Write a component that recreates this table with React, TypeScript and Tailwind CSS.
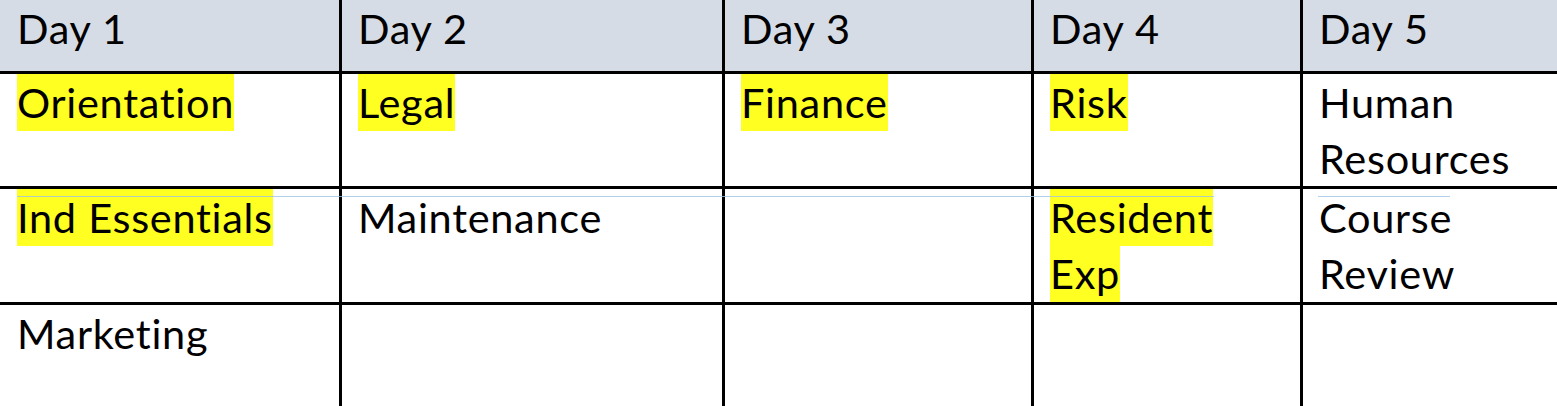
import React from "react";

type Seg = { t: string; h?: boolean };

const header = ["Day 1", "Day 2", "Day 3", "Day 4", "Day 5"];

const rows: Seg[][][] = [
  [
    [{ t: "Orientation", h: true }],
    [{ t: "Legal", h: true }],
    [{ t: "Finance", h: true }],
    [{ t: "Risk", h: true }],
    [{ t: "Human" }, { t: "Resources" }],
  ],
  [
    [{ t: "Ind Essentials", h: true }],
    [{ t: "Maintenance" }],
    [],
    [{ t: "Resident", h: true }, { t: "Exp", h: true }],
    [{ t: "Course" }, { t: "Review" }],
  ],
  [[{ t: "Marketing" }], [], [], [], []],
];

const cols = "grid grid-cols-[339px_383px_309px_269px_257px]";
const heights = ["h-[115px]", "h-[116px]", "h-[101px]"];

function Cell({ i, children }: { i: number; children?: React.ReactNode }) {
  return (
    <div
      className={
        i === 0
          ? "pl-[17px] overflow-hidden"
          : "border-l-[3px] border-black pl-[16px] overflow-hidden"
      }
    >
      {children}
    </div>
  );
}

function Line({ seg }: { seg: Seg }) {
  return (
    <div className="h-[56px] leading-[57px] whitespace-nowrap">
      <span
        className={
          "inline-block h-[57px] leading-[57px] " + (seg.h ? "bg-[#ffff22]" : "")
        }
      >
        {seg.t}
      </span>
    </div>
  );
}

export default function App() {
  return (
    <div className="relative w-[1557px] h-[406px] overflow-hidden bg-white text-black font-[Lato,_sans-serif] font-normal text-[41.5px] tracking-[0.7px]">
      <div className={cols + " h-[74px] bg-[#d6dce5] border-b-[3px] border-black"}>
        {header.map((h, i) => (
          <Cell key={i} i={i}>
            <Line seg={{ t: h }} />
          </Cell>
        ))}
      </div>
      {rows.map((r, ri) => (
        <div
          key={ri}
          className={cols + " " + heights[ri] + (ri < 2 ? " border-b-[3px] border-black" : "")}
        >
          {r.map((c, ci) => (
            <Cell key={ci} i={ci}>
              {c.map((s, si) => (
                <Line key={si} seg={s} />
              ))}
            </Cell>
          ))}
        </div>
      ))}
      <div className="absolute top-[196px] left-[17px] w-[1197px] h-px bg-[#9dc3e6]/80" />
      <div className="absolute top-[196px] left-[1318px] w-[132px] h-px bg-[#9dc3e6]/80" />
    </div>
  );
}
